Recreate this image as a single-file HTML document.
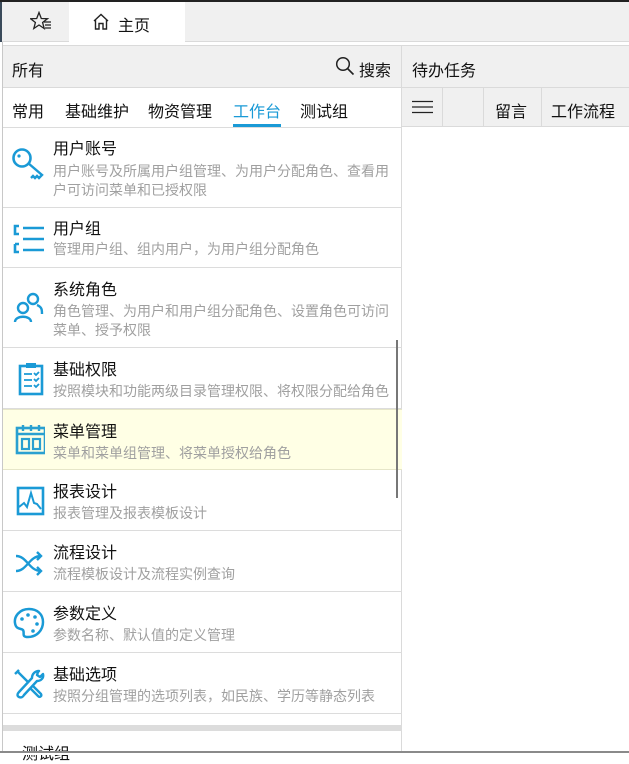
<!DOCTYPE html>
<html><head><meta charset="utf-8"><style>
*{margin:0;padding:0;box-sizing:border-box}
body{width:629px;height:755px;overflow:hidden;background:#fff;font-family:"Liberation Sans","Noto Sans CJK SC",sans-serif;position:relative}
.a{position:absolute}
.item{position:absolute;left:3px;width:399px;border-bottom:1px solid #dcdcdc}
.item .t{position:absolute;left:50px;font-size:16px;color:#111;line-height:19px}
.item .d{position:absolute;left:50px;width:342px;font-size:14px;color:#a0a0a0;line-height:19px}
.item svg{position:absolute;left:8px}
.h{font-size:16px;color:#111}
</style></head><body>
<div class="a" style="left:0;top:0;width:629px;height:42px;background:#f0f0f0;border-bottom:1px solid #dadada"></div>
<div class="a" style="left:0;top:0;width:2px;height:42px;background:#3a4a5a"></div>
<div class="a" style="left:0;top:0;width:629px;height:2px;background:#222"></div>
<svg class="a" style="left:30px;top:11px" width="22" height="20" viewBox="0 0 22 20"><path d="M9 1.5 L11.3 7.5 L17.5 7.7 L12.6 11.5 L14.2 17.5 L9 14 L3.8 17.5 L5.4 11.5 L0.5 7.7 L6.7 7.5 Z" fill="none" stroke="#222" stroke-width="1.3"/><path d="M14 11h7M15 14h6M15 17h6" stroke="#222" stroke-width="1.2"/></svg>
<div class="a" style="left:69px;top:2px;width:116px;height:41px;background:#fff"></div>
<svg class="a" style="left:92px;top:13px" width="18" height="17" viewBox="0 0 18 17"><path d="M2 8 L9 1.5 L16 8 M3.5 7 V16 H7 V10.5 H11 V16 H14.5 V7" fill="none" stroke="#222" stroke-width="1.4"/></svg>
<div class="a h" style="left:118px;top:12px">主页</div>

<div class="a" style="left:2px;top:45px;width:627px;height:43px;background:#f0f0f0;border-top:1px solid #dadada;border-bottom:1px solid #dadada"></div>
<div class="a" style="left:401px;top:45px;width:1px;height:710px;background:#dadada"></div>
<div class="a h" style="left:12px;top:57px">所有</div>
<svg class="a" style="left:335px;top:56px" width="20" height="20" viewBox="0 0 20 20"><circle cx="8" cy="8" r="6.3" fill="none" stroke="#222" stroke-width="1.5"/><path d="M12.5 12.5 L18.5 18.5" stroke="#222" stroke-width="1.6"/></svg>
<div class="a h" style="left:359px;top:57px">搜索</div>
<div class="a h" style="left:412px;top:57px">待办任务</div>

<div class="a h" style="left:12px;top:98px">常用</div>
<div class="a h" style="left:65px;top:98px">基础维护</div>
<div class="a h" style="left:148px;top:98px">物资管理</div>
<div class="a h" style="left:233px;top:98px;color:#1a9ad6">工作台</div>
<div class="a" style="left:233px;top:124px;width:48px;height:3px;background:#1a9ad6"></div>
<div class="a h" style="left:300px;top:98px">测试组</div>
<div class="a" style="left:2px;top:127px;width:399px;height:1px;background:#dcdcdc"></div>

<div class="a" style="left:402px;top:88px;width:227px;height:39px;background:#f0f0f0;border-bottom:1px solid #dadada"></div>
<div class="a" style="left:442px;top:88px;width:1px;height:39px;background:#dadada"></div>
<div class="a" style="left:483px;top:88px;width:1px;height:39px;background:#dadada"></div>
<div class="a" style="left:541px;top:88px;width:1px;height:39px;background:#dadada"></div>
<svg class="a" style="left:412px;top:100px" width="22" height="14"><path d="M0 1.5h21M0 7h21M0 12.5h21" stroke="#222" stroke-width="1.3"/></svg>
<div class="a h" style="left:495px;top:98px">留言</div>
<div class="a h" style="left:551px;top:98px">工作流程</div>

<div class="a" style="left:2px;top:42px;width:1px;height:713px;background:#c8c8c8"></div>

<div class="item" style="top:128px;height:80px">
<svg style="top:18px" width="34" height="40" viewBox="0 0 34 40"><circle cx="11" cy="12" r="8.5" fill="none" stroke="#1a9ad6" stroke-width="2.6"/><circle cx="8" cy="10" r="1.6" fill="#1a9ad6"/><path d="M17 17 L31 29 L28 32 L26 30 L24 32 L22 30 L20 32" fill="none" stroke="#1a9ad6" stroke-width="2.4"/></svg>
<div class="t" style="top:12px">用户账号</div><div class="d" style="top:34px">用户账号及所属用户组管理、为用户分配角色、查看用户可访问菜单和已授权限</div></div>
<div class="item" style="top:208px;height:60px">
<svg style="top:16px" width="34" height="30" viewBox="0 0 34 30"><path d="M8 2 H4 V10 H8 M4 20 V28 H8 M8 20 H4" fill="none" stroke="#1a9ad6" stroke-width="2.6"/><path d="M12 4h21M12 15h21M12 26h21" stroke="#1a9ad6" stroke-width="2.6"/></svg>
<div class="t" style="top:12px">用户组</div><div class="d" style="top:32px">管理用户组、组内用户，为用户组分配角色</div></div>
<div class="item" style="top:268px;height:80px">
<svg style="top:22px" width="34" height="34" viewBox="0 0 34 34"><circle cx="22" cy="9" r="5" fill="none" stroke="#1a9ad6" stroke-width="2.4"/><circle cx="12" cy="18" r="5" fill="none" stroke="#1a9ad6" stroke-width="2.4"/><path d="M4 32 C4 25 20 25 20 32 M26 15 C31 17 31 20 31 24" fill="none" stroke="#1a9ad6" stroke-width="2.4"/></svg>
<div class="t" style="top:13px">系统角色</div><div class="d" style="top:34px">角色管理、为用户和用户组分配角色、设置角色可访问菜单、授予权限</div></div>
<div class="item" style="top:348px;height:61px">
<svg style="top:14px" width="34" height="34" viewBox="0 0 34 34"><rect x="9" y="4" width="22" height="28" fill="none" stroke="#1a9ad6" stroke-width="2.6"/><rect x="15" y="1" width="10" height="5" fill="#1a9ad6"/><path d="M13 12h8M13 18h8M13 24h8M23 11l2 2 3-3M23 17l2 2 3-3M23 23l2 2 3-3" stroke="#1a9ad6" stroke-width="1.8" fill="none"/></svg>
<div class="t" style="top:13px">基础权限</div><div class="d" style="top:34px">按照模块和功能两级目录管理权限、将权限分配给角色</div></div>
<div class="item" style="top:409px;height:61px;background:#ffffe5;border-top:1px solid #e6e6c8;border-bottom:1px solid #e6e6c8">
<svg style="top:14px" width="34" height="32" viewBox="0 0 34 32"><rect x="6" y="4" width="28" height="25" fill="none" stroke="#2aa0d0" stroke-width="2.6"/><path d="M6 10h28M12 1v6M28 1v6M20 1v6" stroke="#2aa0d0" stroke-width="2.4"/><rect x="11" y="15" width="7" height="10" fill="none" stroke="#2aa0d0" stroke-width="2.2"/><rect x="22" y="15" width="7" height="10" fill="none" stroke="#2aa0d0" stroke-width="2.2"/></svg>
<div class="t" style="top:13px">菜单管理</div><div class="d" style="top:34px">菜单和菜单组管理、将菜单授权给角色</div></div>
<div class="item" style="top:470px;height:61px">
<svg style="top:15px" width="34" height="32" viewBox="0 0 34 32"><rect x="7" y="3" width="25" height="26" fill="none" stroke="#1a9ad6" stroke-width="2.6"/><path d="M8 22 L13 18 L16 22 L20 8 L23 18 L26 19 L30 24" fill="none" stroke="#1a9ad6" stroke-width="2"/></svg>
<div class="t" style="top:13px">报表设计</div><div class="d" style="top:34px">报表管理及报表模板设计</div></div>
<div class="item" style="top:531px;height:61px">
<svg style="top:16px" width="34" height="30" viewBox="0 0 34 30"><path d="M5 9 C16 9 18 24 30 24 M5 24 C16 24 18 9 30 9 M26 5l4 4-4 4M26 20l4 4-4 4" fill="none" stroke="#1a9ad6" stroke-width="2.4"/></svg>
<div class="t" style="top:13px">流程设计</div><div class="d" style="top:34px">流程模板设计及流程实例查询</div></div>
<div class="item" style="top:592px;height:61px">
<svg style="top:14px" width="34" height="34" viewBox="0 0 34 34"><path d="M18 3 C8 3 3 11 4 17 C5 24 10 22 12 24 C14 27 10 31 17 31 C26 31 32 24 32 16 C32 8 26 3 18 3 Z" fill="none" stroke="#1a9ad6" stroke-width="2.5"/><circle cx="11" cy="13" r="1.8" fill="#1a9ad6"/><circle cx="17" cy="9" r="1.8" fill="#1a9ad6"/><circle cx="24" cy="11" r="1.8" fill="#1a9ad6"/><circle cx="26" cy="18" r="1.8" fill="#1a9ad6"/><circle cx="22" cy="25" r="1.8" fill="#1a9ad6"/></svg>
<div class="t" style="top:13px">参数定义</div><div class="d" style="top:34px">参数名称、默认值的定义管理</div></div>
<div class="item" style="top:653px;height:61px">
<svg style="top:14px" width="34" height="34" viewBox="0 0 34 34"><path d="M6 4 L18 16 M4 7 L8 3 M28 4 C24 4 21 7 21 11 L8 25 C6 27 6 29 8 30 C10 31 12 30 13 28 L26 14 C30 14 33 11 32 7 L29 10 L26 8 L27 5 Z M19 21 L27 29 C29 31 31 29 30 27 L22 19" fill="none" stroke="#1a9ad6" stroke-width="2.4" stroke-linejoin="round"/></svg>
<div class="t" style="top:13px">基础选项</div><div class="d" style="top:34px">按照分组管理的选项列表，如民族、学历等静态列表</div></div>
<div class="a" style="left:3px;top:725px;width:399px;height:6px;background:#dcdcdc"></div>
<div class="a h" style="left:22px;top:740px">测试组</div>
<div class="a" style="left:396px;top:340px;width:2px;height:158px;background:#777"></div>
<div class="a" style="left:0;top:751px;width:629px;height:4px;background:#fff"></div>
<div class="a" style="left:0;top:751px;width:629px;height:2px;background:#8a8a8a"></div>
</body></html>
